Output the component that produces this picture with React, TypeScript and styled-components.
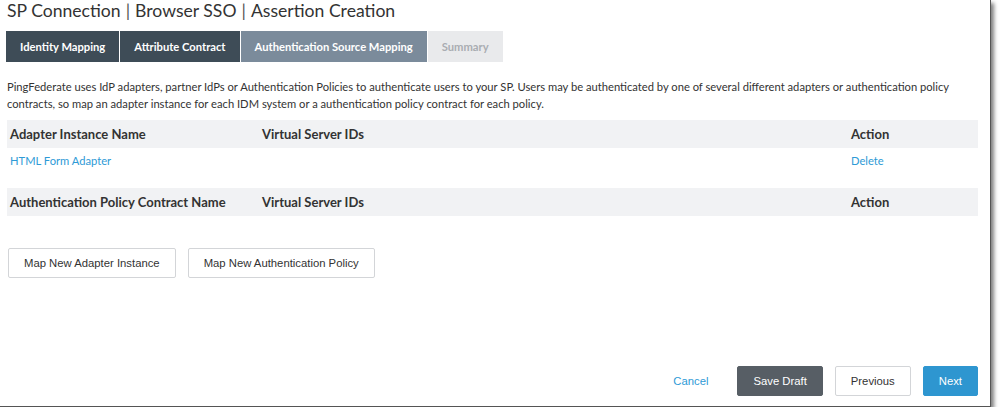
import styled, { createGlobalStyle } from "styled-components"

const Global = createGlobalStyle`
  body {
    margin: 0;
    background: #fff;
    font-family: "Lato", "Liberation Sans", sans-serif;
    color: #333;
  }
`

const Frame = styled.div`
  width: 991px;
  height: 407px;
  box-sizing: border-box;
  border-right: 1px solid #555;
  border-bottom: 1px solid #555;
  box-shadow: 3px 3px 4px rgba(0, 0, 0, 0.5);
  display: flex;
  flex-direction: column;
  padding: 0 12px 0 7px;
  background: #fff;
`

const Title = styled.h1`
  margin: 0;
  font-size: 17.6px;
  line-height: 22px;
  font-weight: 400;
  color: #333;
`

const Sep = styled.span`
  color: #555;
  margin: 0 5px;
`

const Tabs = styled.div`
  display: flex;
  margin: 9px 0 0 -1px;
  gap: 1px;
`

const Tab = styled.div<{ $state: "done" | "active" | "todo" }>`
  height: 31px;
  padding: 0 14px;
  display: flex;
  align-items: center;
  font-size: 11.2px;
  font-weight: 700;
  background: ${(p) => (p.$state === "done" ? "#3e4c57" : p.$state === "active" ? "#7b8b9b" : "#e9eaec")};
  color: ${(p) => (p.$state === "todo" ? "#a9adb2" : "#fff")};
`

const Intro = styled.p`
  margin: 16px 0 0;
  max-width: 960px;
  font-size: 11.2px;
  line-height: 17px;
  color: #333;
`

const Table = styled.div`
  margin-top: 8px;
  width: 971px;
`

const Row = styled.div<{ $head?: boolean }>`
  display: grid;
  grid-template-columns: 252px 589px 1fr;
  background: ${(p) => (p.$head ? "#f1f2f4" : "transparent")};
  height: ${(p) => (p.$head ? "28px" : "40px")};
  align-items: ${(p) => (p.$head ? "center" : "start")};
  padding-left: 3px;
  font-size: ${(p) => (p.$head ? "13px" : "11.2px")};
  font-weight: ${(p) => (p.$head ? 700 : 400)};
  color: #333;
  & > * {
    padding-top: ${(p) => (p.$head ? "0" : "6px")};
  }
`

const Link = styled.a`
  color: #2e9ad6;
  text-decoration: none;
  cursor: pointer;
`

const Actions = styled.div`
  display: flex;
  gap: 12px;
  margin-top: 32px;
  padding-left: 1px;
`

const Button = styled.button<{ $kind?: "dark" | "primary" | "plain" }>`
  height: 30px;
  padding: 0 15px;
  border-radius: 2px;
  font-family: "Liberation Sans", Arial, sans-serif;
  font-size: 11.3px;
  cursor: pointer;
  border: 1px solid
    ${(p) => (p.$kind === "dark" ? "#575e65" : p.$kind === "primary" ? "#2e96d0" : "#d3d5d8")};
  background: ${(p) => (p.$kind === "dark" ? "#575e65" : p.$kind === "primary" ? "#2e96d0" : "#fff")};
  color: ${(p) => (p.$kind === "dark" || p.$kind === "primary" ? "#fff" : "#333")};
`

const Footer = styled.div`
  margin-top: auto;
  margin-bottom: 10px;
  display: flex;
  justify-content: flex-end;
  align-items: center;
  gap: 12px;
`

const CancelLink = styled(Link)`
  font-family: "Liberation Sans", Arial, sans-serif;
  font-size: 11.3px;
  margin-right: 17px;
`

export default function App() {
  return (
    <>
      <Global />
      <Frame>
        <Title>
          SP Connection<Sep>|</Sep>Browser SSO<Sep>|</Sep>Assertion Creation
        </Title>
        <Tabs>
          <Tab $state="done">Identity Mapping</Tab>
          <Tab $state="done">Attribute Contract</Tab>
          <Tab $state="active">Authentication Source Mapping</Tab>
          <Tab $state="todo">Summary</Tab>
        </Tabs>
        <Intro>
          PingFederate uses IdP adapters, partner IdPs or Authentication Policies to authenticate users to your SP. Users may be authenticated by one of several different adapters or authentication policy contracts, so map an adapter instance for each IDM system or a authentication policy contract for each policy.
        </Intro>
        <Table>
          <Row $head>
            <div>Adapter Instance Name</div>
            <div>Virtual Server IDs</div>
            <div>Action</div>
          </Row>
          <Row>
            <div><Link>HTML Form Adapter</Link></div>
            <div></div>
            <div><Link>Delete</Link></div>
          </Row>
          <Row $head>
            <div>Authentication Policy Contract Name</div>
            <div>Virtual Server IDs</div>
            <div>Action</div>
          </Row>
        </Table>
        <Actions>
          <Button>Map New Adapter Instance</Button>
          <Button>Map New Authentication Policy</Button>
        </Actions>
        <Footer>
          <CancelLink>Cancel</CancelLink>
          <Button $kind="dark">Save Draft</Button>
          <Button>Previous</Button>
          <Button $kind="primary">Next</Button>
        </Footer>
      </Frame>
    </>
  )
}
